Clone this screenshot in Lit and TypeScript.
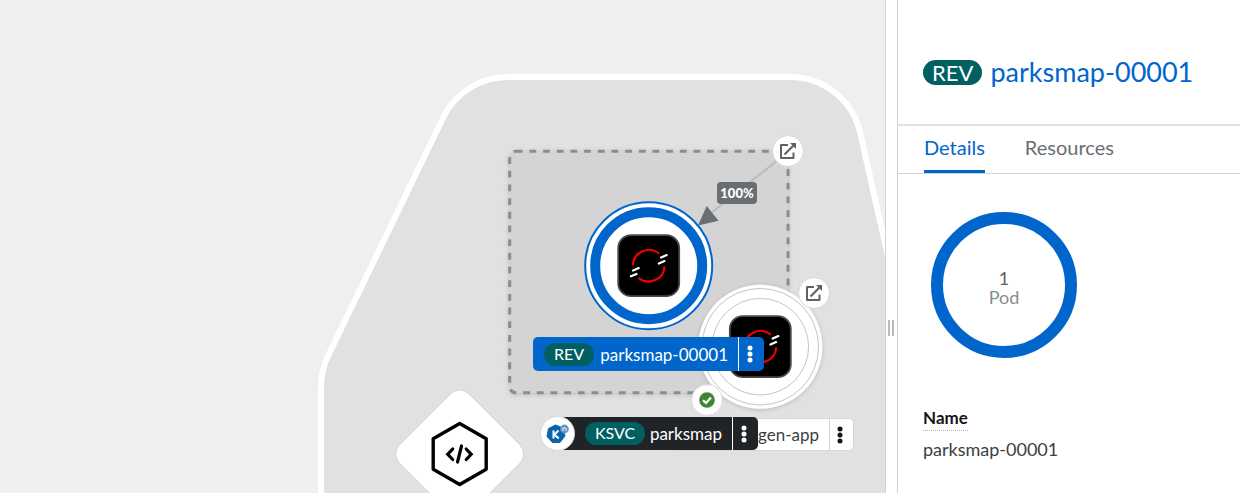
import { LitElement, html, svg, css } from "lit";
import { customElement, property, state } from "lit/decorators.js";

const kebab = html`<svg class="kebab" width="6" height="18" viewBox="0 0 6 18" aria-hidden="true">
  <circle cx="3" cy="3" r="2.5" /><circle cx="3" cy="9" r="2.5" /><circle cx="3" cy="15" r="2.5" />
</svg>`;

/* Black rounded tile with the red ring and white ticks, centred on the origin. */
const appTile = svg`
  <rect x="-30.5" y="-30.5" width="61" height="61" rx="13" fill="#000" stroke="#4a4a4a" stroke-width="1.8" />
  <path d="M-15.8 -0.5 A16 16 0 0 1 10.5 -12 M15.9 0.5 A16 16 0 0 1 -10.2 12.2" fill="none" stroke="#f00000" stroke-width="2.2" />
  <path d="M12.4 -8.2 L18 -10.6 M10.2 -2.2 L15.8 -4.6 M-15.6 4.8 L-10 2.4 M-17.8 10.6 L-12.2 8.2" fill="none" stroke="#fff" stroke-width="2.2" stroke-linecap="round" />
`;

const openIcon = html`<svg width="18" height="18" viewBox="0 0 18 18" aria-hidden="true">
  <path d="M9 3 H2 V16 H14.5 V10.5" fill="none" stroke="#5f6368" stroke-width="2" stroke-linejoin="round" />
  <path d="M5.5 12.5 L15 3" fill="none" stroke="#5f6368" stroke-width="2.2" />
  <path d="M11 1 H17 V7 Z" fill="#5f6368" />
</svg>`;

@customElement("topology-canvas")
export class TopologyCanvas extends LitElement {
  static styles = css`
    :host {
      display: block;
      position: relative;
      overflow: hidden;
      background: #efefef;
      font-size: 17px;
    }
    .shapes {
      position: absolute;
      inset: 0;
      width: 100%;
      height: 100%;
    }
    button {
      font: inherit;
      border: 0;
      padding: 0;
      background: none;
      color: inherit;
      cursor: pointer;
    }
    .label {
      position: absolute;
      box-sizing: border-box;
      height: 34px;
      display: flex;
      align-items: stretch;
      border-radius: 5px;
      white-space: nowrap;
    }
    .label .text {
      flex: 1;
      display: flex;
      align-items: center;
      justify-content: space-between;
      padding: 0 10px 0 11px;
    }
    .label .menu {
      width: 26px;
      padding-right: 3px;
      display: flex;
      align-items: center;
      justify-content: center;
      border-left: 1px solid currentColor;
    }
    .kebab {
      fill: currentColor;
    }
    .pill {
      background: #005f60;
      color: #fff;
      border-radius: 12px;
      height: 23px;
      font-size: 16px;
      line-height: 22px;
      padding: 0 10px;
    }
    .rev {
      left: 533px;
      top: 337px;
      width: 231px;
      background: #06c;
      color: #fff;
    }
    .gen {
      left: 668px;
      top: 418px;
      width: 186px;
      height: 33px;
      background: #fff;
      color: #3c3f42;
      border: 1px solid #d8d8d8;
    }
    .gen .text {
      justify-content: flex-end;
    }
    .gen .menu {
      width: 24px;
      color: #151515;
      border-left-color: #d2d2d2;
    }
    .ksvc {
      left: 557px;
      top: 417px;
      width: 201px;
      height: 33px;
      background: #212427;
      color: #fff;
    }
    .ksvc .text {
      padding-left: 28px;
    }
    .round {
      position: absolute;
      box-sizing: border-box;
      width: 32px;
      height: 32px;
      border-radius: 50%;
      background: #fff;
      border: 1px solid #d8d8d8;
      display: flex;
      align-items: center;
      justify-content: center;
    }
    .open-rev {
      left: 772px;
      top: 135px;
    }
    .open-app {
      left: 798px;
      top: 277px;
    }
    .build {
      left: 691px;
      top: 384px;
    }
    .knative {
      left: 540px;
      top: 416px;
      width: 35px;
      height: 35px;
    }
    .share {
      position: absolute;
      left: 717px;
      top: 182px;
      width: 40px;
      height: 22px;
      border-radius: 4px;
      background: #6a6e73;
      color: #fff;
      font-size: 13px;
      font-weight: 900;
      line-height: 22px;
      text-align: center;
    }
  `;

  render() {
    return html`
      <svg class="shapes" aria-hidden="true">
        <defs>
          <filter id="soft" x="-10%" y="-10%" width="120%" height="120%">
            <feDropShadow dx="0" dy="1" stdDeviation="2" flood-color="#030303" flood-opacity="0.18" />
          </filter>
        </defs>
        <path
          d="M321 560 V387 A72 72 0 0 1 328.5 355 L443.5 117 A72 72 0 0 1 508 77 H790 A72 72 0 0 1 860.3 133.2 L956 560 Z"
          fill="#e1e1e1" stroke="#fff" stroke-width="6"
        />
        <g filter="url(#soft)">
          <rect
            x="509.7" y="151.3" width="278.3" height="241.4" rx="6"
            fill="#d4d4d4" stroke="#8a8d90" stroke-width="3" stroke-dasharray="6.84"
          />
        </g>
        <path d="M788 152 L710 214" stroke="#b8bbbe" stroke-width="2" />
        <path d="M698 225.5 L706.7 206 L718.5 220.7 Z" fill="#6a6e73" />
        <g transform="translate(648.7 265.7)">
          <circle r="63.5" fill="#fff" stroke="#06c" stroke-width="2" />
          <circle r="53.5" fill="none" stroke="#06c" stroke-width="10" />
          ${appTile}
        </g>
        <g transform="translate(760.3 346.7)">
          <circle r="62" fill="#fff" filter="url(#soft)" />
          <circle r="58.3" fill="none" stroke="#c4c4c4" />
          <circle r="48.3" fill="none" stroke="#c4c4c4" />
          ${appTile}
        </g>
        <g transform="translate(459.7 454)">
          <rect x="-49" y="-49" width="98" height="98" rx="13" transform="rotate(45)" fill="#fff" stroke="#d0d0d0" stroke-width="0.8" />
          <path d="M0 -30.5 L26.5 -15.3 V15.3 L0 30.5 L-26.5 15.3 V-15.3 Z" fill="none" stroke="#000" stroke-width="3.4" stroke-linejoin="round" />
          <path d="M-7 -5 L-12 0.3 L-7 5.5 M6.5 -5 L11.5 0.3 L6.5 5.5 M1.8 -8 L-2.2 8" fill="none" stroke="#000" stroke-width="3.2" stroke-linecap="round" />
        </g>
      </svg>

      <div class="share">100%</div>
      <button class="round open-rev" aria-label="Open revision URL">${openIcon}</button>
      <button class="round open-app" aria-label="Open application URL">${openIcon}</button>

      <div class="label gen">
        <span class="text">gen-app</span>
        <button class="menu" aria-label="gen-app actions">${kebab}</button>
      </div>
      <div class="label rev">
        <span class="text"><span class="pill">REV</span><span>parksmap-00001</span></span>
        <button class="menu" aria-label="parksmap-00001 actions">${kebab}</button>
      </div>
      <div class="label ksvc">
        <span class="text"><span class="pill">KSVC</span><span>parksmap</span></span>
        <button class="menu" aria-label="parksmap actions">${kebab}</button>
      </div>
      <div class="round knative">
        <svg width="24" height="24" viewBox="0 0 24 24" aria-hidden="true">
          <path d="M9.5 3 L17 6 L19 14 L14 20.5 H6.5 L1 14.5 L2.5 6.5 Z" fill="#0865ad" stroke="#0865ad" stroke-linejoin="round" />
          <path d="M7.5 8.5 V16.5 M12.5 8.5 L8.4 12.6 L12.8 16.5" fill="none" stroke="#fff" stroke-width="2" />
          <circle cx="18.5" cy="7" r="4.4" fill="#6695ca" />
          <path d="M17 9 V5.5 M17 6.9 Q18.5 4.9 20 6.7 V9" fill="none" stroke="#d5e2f2" stroke-width="1.1" />
        </svg>
      </div>
      <button class="round build" aria-label="Build complete">
        <svg width="16" height="16" viewBox="0 0 16 16" aria-hidden="true">
          <circle cx="8" cy="8" r="7.8" fill="#3e8635" />
          <path d="M4 8.2 L7 11 L12 5.6" fill="none" stroke="#fff" stroke-width="2.2" />
        </svg>
      </button>
    `;
  }
}

@customElement("detail-panel")
export class DetailPanel extends LitElement {
  @property() name = "";
  @state() private tab = "Details";

  static styles = css`
    :host {
      display: block;
      box-sizing: border-box;
      border-left: 1px solid #d2d2d2;
      background: #fff;
      color: #3c3f42;
      font-size: 18px;
    }
    .heading {
      display: flex;
      align-items: center;
      gap: 8px;
      margin: 0;
      padding: 52px 24px 32px 25px;
      font-size: 27px;
      line-height: 40px;
      font-weight: 400;
    }
    .badge {
      background: #005f60;
      color: #fff;
      font-size: 22px;
      line-height: 25px;
      border-radius: 13px;
      padding: 0 9px;
    }
    a {
      color: #06c;
      text-decoration: none;
    }
    .tabs {
      display: flex;
      gap: 40px;
      padding: 0 26px;
      border-top: 2px solid #e2e2e2;
      border-bottom: 1px solid #d2d2d2;
    }
    .tab {
      font: inherit;
      font-size: 20px;
      line-height: 24px;
      padding: 9px 0 11px;
      border: 0;
      border-bottom: 3px solid transparent;
      background: none;
      color: #6a6e73;
      cursor: pointer;
    }
    .tab[aria-selected="true"] {
      color: #06c;
      border-bottom-color: #06c;
    }
    .body {
      padding: 38px 25px;
    }
    .donut {
      box-sizing: border-box;
      width: 146px;
      height: 146px;
      margin: 0 8px;
      padding-top: 6px;
      border: 12px solid #06c;
      border-radius: 50%;
      display: flex;
      flex-direction: column;
      align-items: center;
      justify-content: center;
      line-height: 19px;
      color: #8a8d90;
    }
    .count {
      color: #5c5f63;
    }
    dl {
      margin: 48px 0 0;
      line-height: 24px;
    }
    dt {
      font-size: 17px;
      font-weight: 700;
      color: #151515;
    }
    .term {
      display: inline-block;
      border-bottom: 1px dotted #b0b3b6;
    }
    dd {
      margin: 6px 0 0;
    }
  `;

  render() {
    return html`
      <h1 class="heading">
        <span class="badge">REV</span><a href="#">${this.name}</a>
      </h1>
      <div class="tabs" role="tablist">
        ${["Details", "Resources"].map(
          (label) => html`<button
            class="tab"
            role="tab"
            aria-selected=${this.tab === label ? "true" : "false"}
            @click=${() => (this.tab = label)}
          >${label}</button>`
        )}
      </div>
      <div class="body">
        <div class="donut"><span class="count">1</span><span>Pod</span></div>
        <dl>
          <dt><span class="term">Name</span></dt>
          <dd>${this.name}</dd>
        </dl>
      </div>
    `;
  }
}

@customElement("app-root")
export class AppRoot extends LitElement {
  static styles = css`
    :host {
      display: flex;
      min-height: 100vh;
      overflow: hidden;
      font-family: Lato, "Open Sans", sans-serif;
    }
    topology-canvas {
      flex: 1;
      min-width: 0;
    }
    .splitter {
      box-sizing: border-box;
      flex: 0 0 12px;
      display: flex;
      align-items: center;
      justify-content: center;
      gap: 2px;
      padding: 156px 1px 0 0;
      border-left: 1px solid #d2d2d2;
      background: #fff;
      cursor: col-resize;
    }
    .grip {
      width: 2px;
      height: 16px;
      background: #b8bbbe;
    }
    detail-panel {
      flex: 0 0 343px;
    }
  `;

  render() {
    return html`
      <topology-canvas></topology-canvas>
      <div class="splitter" role="separator" aria-orientation="vertical">
        <span class="grip"></span><span class="grip"></span>
      </div>
      <detail-panel name="parksmap-00001"></detail-panel>
    `;
  }
}
